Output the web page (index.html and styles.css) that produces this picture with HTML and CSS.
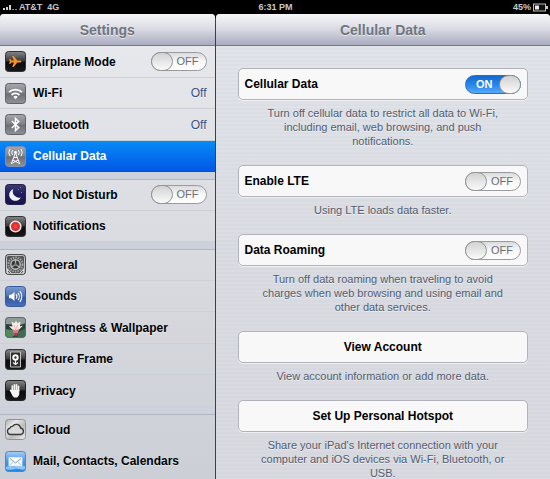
FILE: index.html
```html
<!DOCTYPE html>
<html lang="en">
<head>
<meta charset="utf-8">
<meta name="viewport" content="width=device-width, initial-scale=1">
<title>Settings</title>
<link rel="stylesheet" href="styles.css">
</head>
<body>
<svg class="defs" width="0" height="0" aria-hidden="true">
  <defs>
    <linearGradient id="black" x1="0" y1="0" x2="0" y2="1"><stop offset="0" stop-color="#85868a"/><stop offset=".48" stop-color="#37383b"/><stop offset=".52" stop-color="#0b0b0d"/><stop offset="1" stop-color="#17181a"/></linearGradient>
    <linearGradient id="grey" x1="0" y1="0" x2="0" y2="1"><stop offset="0" stop-color="#a5a7ac"/><stop offset=".48" stop-color="#7f8287"/><stop offset=".52" stop-color="#6b6e74"/><stop offset="1" stop-color="#8f9297"/></linearGradient>
    <linearGradient id="night" x1="0" y1="0" x2="0" y2="1"><stop offset="0" stop-color="#3d3a72"/><stop offset=".5" stop-color="#211d5c"/><stop offset="1" stop-color="#17144a"/></linearGradient>
    <linearGradient id="blue" x1="0" y1="0" x2="0" y2="1"><stop offset="0" stop-color="#7f9bd0"/><stop offset=".48" stop-color="#4c70b5"/><stop offset=".52" stop-color="#3259a5"/><stop offset="1" stop-color="#4770b8"/></linearGradient>
    <linearGradient id="sky" x1="0" y1="0" x2="0" y2="1"><stop offset="0" stop-color="#a8cdf5"/><stop offset=".5" stop-color="#4796ea"/><stop offset="1" stop-color="#2284e6"/></linearGradient>
    <linearGradient id="silver" x1="0" y1="0" x2="1" y2="1"><stop offset="0" stop-color="#aaa"/><stop offset=".3" stop-color="#e6e6e6"/><stop offset=".6" stop-color="#bcbcbc"/><stop offset="1" stop-color="#efefef"/></linearGradient>
    <radialGradient id="red"><stop offset="0" stop-color="#ef4a48"/><stop offset="1" stop-color="#d81c20"/></radialGradient>
    <clipPath id="tile"><rect x=".5" y=".5" width="20" height="20" rx="3"/></clipPath>
  </defs>
</svg>

<header class="status">
  <div class="carrier">
    <svg width="14" height="8" viewBox="0 0 14 8" aria-hidden="true"><path d="M0 5h2v2H0zM3 4h2v3H3zM6 2h2v5H6z" fill="#d5d5d5"/><path d="M9 6h2v1H9zM12 6h2v1h-2z" fill="#888"/></svg>
    <span>AT&amp;T</span><span class="network">4G</span>
  </div>
  <time>6:31 PM</time>
  <div class="battery">
    <span>45%</span>
    <svg width="15" height="9" viewBox="0 0 15 9" aria-hidden="true"><rect x=".5" y="1" width="12" height="7" fill="#111" stroke="#bbb"/><path d="M2 2.5h4v4H2z" fill="#e8e8e8"/><path d="M13 3h2v3h-2z" fill="#ccc"/></svg>
  </div>
</header>

<div class="split">
  <nav class="sidebar" aria-label="Settings">
    <h1 class="bar">Settings</h1>
    <ul class="group">
      <li><label class="item">
        <svg class="icon" viewBox="0 0 21 21" aria-hidden="true"><rect x=".5" y=".5" width="20" height="20" rx="3" fill="url(#black)" stroke="#333"/><path d="M16.5 10.5c0-.7-.9-1.1-2-1.1h-2.2L8.7 5H7.2l1.7 4.400H6.400L5.200 7.900H4.100l.7 2.600-.7 2.600h1.100l1.200-1.500h2.500L7.200 16h1.500l3.600-4.400h2.200c1.100 0 2-.4 2-1.100z" fill="#f7941f"/></svg>
        <span class="name">Airplane Mode</span>
        <span class="switch"><input type="checkbox" role="switch"><span class="state off">OFF</span><span class="state on">ON</span></span>
      </label></li>
      <li><a class="item" href="#wifi">
        <svg class="icon" viewBox="0 0 21 21" aria-hidden="true"><rect x=".5" y=".5" width="20" height="20" rx="3" fill="url(#grey)" stroke="#606267"/><g fill="none" stroke="#fff" stroke-width="1.8"><path d="M4 9.2a9.4 9.4 0 0 1 13 0"/><path d="M6.5 12a5.8 5.8 0 0 1 8 0"/></g><path d="M8.3 13.8a3.2 3.2 0 0 1 4.4 0l-2.2 2.4z" fill="#fff"/></svg>
        <span class="name">Wi-Fi</span><span class="value">Off</span>
      </a></li>
      <li><a class="item" href="#bluetooth">
        <svg class="icon" viewBox="0 0 21 21" aria-hidden="true"><rect x=".5" y=".5" width="20" height="20" rx="3" fill="url(#grey)" stroke="#606267"/><path d="M6.8 7l7 6.6-3.3 3V4.4l3.3 3-7 6.6" fill="none" stroke="#fff" stroke-width="1.5"/></svg>
        <span class="name">Bluetooth</span><span class="value">Off</span>
      </a></li>
      <li><a class="item current" href="#cellular" aria-current="page">
        <svg class="icon" viewBox="0 0 21 21" aria-hidden="true"><rect x=".5" y=".5" width="20" height="20" rx="3" fill="url(#grey)" stroke="#7c90b0"/><g fill="none" stroke="#fff"><path d="M10.5 7L6.2 18M10.5 7l4.3 11M8.8 11.5h3.4M8 14l5.8 3.2M13 14l-5.8 3.2"/><path d="M7.6 4.2a4 4 0 0 0 0 4.8M13.4 4.2a4 4 0 0 1 0 4.8M5 3a6.4 6.4 0 0 0 0 7.2M16 3a6.4 6.4 0 0 1 0 7.2"/></g><circle cx="10.5" cy="6.5" r="1.4" fill="#fff"/></svg>
        <span class="name">Cellular Data</span>
      </a></li>
    </ul>
    <ul class="group">
      <li><label class="item">
        <svg class="icon" viewBox="0 0 21 21" aria-hidden="true"><rect x=".5" y=".5" width="20" height="20" rx="3" fill="url(#night)" stroke="#25234e"/><path d="M8.3 5a6.1 6.1 0 1 0 7.5 8.4A6.2 6.2 0 0 1 8.3 5z" fill="#f2f3fa"/><path d="M13 5h1v1h-1zM16 8h1v1h-1zM15 3h1v1h-1z" fill="#7b78ac"/></svg>
        <span class="name">Do Not Disturb</span>
        <span class="switch"><input type="checkbox" role="switch"><span class="state off">OFF</span><span class="state on">ON</span></span>
      </label></li>
      <li><a class="item" href="#notifications">
        <svg class="icon" viewBox="0 0 21 21" aria-hidden="true"><rect x=".5" y=".5" width="20" height="20" rx="3" fill="url(#black)" stroke="#333"/><circle cx="10.5" cy="10.5" r="5.3" fill="url(#red)" stroke="#f4e8e8" stroke-width="1.6"/></svg>
        <span class="name">Notifications</span>
      </a></li>
    </ul>
    <ul class="group">
      <li><a class="item" href="#general">
        <svg class="icon" viewBox="0 0 21 21" aria-hidden="true"><rect x=".5" y=".5" width="20" height="20" rx="3" fill="#58595b" stroke="#4a4b4d"/><g clip-path="url(#tile)"><rect x="1.5" y="1.5" width="18" height="18" rx="2" fill="none" stroke="#bfc0c2"/><circle cx="10.5" cy="10.5" r="7" fill="#464749" stroke="#a9aaac" stroke-width="2" stroke-dasharray="1.5 1"/><circle cx="10.5" cy="10.5" r="4.7" fill="#353638" stroke="#c5c6c8" stroke-width="1.4"/><path d="M10.5 10.5V6M10.5 10.5l4 2.6M10.5 10.5l-4 2.6" stroke="#b2b3b5" stroke-width="1.2"/><circle cx="10.5" cy="10.5" r="1.5" fill="#77787a"/><path d="M2 14l5 5.5H2zM19 14l-5 5.5h5z" fill="#dadbdd"/><path d="M3 17l2 2.4M18 17l-2 2.4" stroke="#444"/></g></svg>
        <span class="name">General</span>
      </a></li>
      <li><a class="item" href="#sounds">
        <svg class="icon" viewBox="0 0 21 21" aria-hidden="true"><rect x=".5" y=".5" width="20" height="20" rx="3" fill="url(#blue)" stroke="#3b5c9c"/><path d="M4 8.8h2.2L9.5 6v9l-3.3-2.8H4z" fill="#fff"/><path d="M11 8.3a3.4 3.4 0 0 1 0 4.4M12.9 6.8a5.6 5.6 0 0 1 0 7.4M14.8 5.2a8 8 0 0 1 0 10.6" fill="none" stroke="#fff" stroke-width="1.1"/></svg>
        <span class="name">Sounds</span>
      </a></li>
      <li><a class="item" href="#brightness">
        <svg class="icon" viewBox="0 0 21 21" aria-hidden="true"><g clip-path="url(#tile)"><path d="M0 0h21v21H0z" fill="#28403b"/><path d="M0 0h21v6l-6 2L0 7z" fill="#8d9a96"/><path d="M0 12l7 1 3 5-4 3H0z" fill="#4f8a5b"/><path d="M13 15l8-4v10h-9z" fill="#3d6b54"/><path d="M10.5 16L4 9l3.500.5L6.500 4.500l3 1.700L11 3.500l1.500 2.800 3-1.800-.6 4.700 3-.5z" fill="#f6ebe6"/><path d="M7 12l3.500 1.200L14.500 12l-2 4.500-1.500 2.500-2.500-2.500z" fill="#e0768c"/><path d="M9 8l1.700 5L12.600 8" fill="none" stroke="#e9b9ba"/><path d="M9 16h3.500l-1.700 4z" fill="#b9304f"/></g><rect x=".5" y=".5" width="20" height="20" rx="3" fill="none" stroke="#596b69"/></svg>
        <span class="name">Brightness &amp; Wallpaper</span>
      </a></li>
      <li><a class="item" href="#frame">
        <svg class="icon" viewBox="0 0 21 21" aria-hidden="true"><rect x=".5" y=".5" width="20" height="20" rx="3" fill="url(#black)" stroke="#333"/><path d="M5.500 3h10v15h-10z" fill="#2c2d2f" stroke="#c4c4c6"/><circle cx="10.500" cy="8.500" r="2.200" fill="none" stroke="#fff" stroke-width="2"/><path d="M10.500 11v5M10.500 15.500l-2.500-2M10.500 15.500l2.500-2" fill="none" stroke="#f0f0f0" stroke-width="1.200"/></svg>
        <span class="name">Picture Frame</span>
      </a></li>
      <li><a class="item" href="#privacy">
        <svg class="icon" viewBox="0 0 21 21" aria-hidden="true"><rect x=".5" y=".5" width="20" height="20" rx="3" fill="url(#black)" stroke="#222"/><g stroke="#f4f4f4" stroke-width="1.700" stroke-linecap="round"><path d="M7.300 11V6.200M9.400 11V4.800M11.500 11V4.800M13.500 11V6.300M5.600 10.500l2 3"/></g><path d="M6.500 10h7.800v3.200c0 2-1 3.500-2.300 4.300H9c-1.200-1-2.500-3-2.500-4.500z" fill="#f4f4f4"/></svg>
        <span class="name">Privacy</span>
      </a></li>
    </ul>
    <ul class="group">
      <li><a class="item" href="#icloud">
        <svg class="icon" viewBox="0 0 21 21" aria-hidden="true"><rect x=".5" y=".5" width="20" height="20" rx="3" fill="url(#silver)" stroke="#929294"/><path d="M5.500 15.500a3.200 3.200 0 0 1-.6-6.300 2.500 2.500 0 0 1 2.700-1.800 4.300 4.300 0 0 1 7.900 1.600 3.300 3.300 0 0 1 .3 6.500z" fill="#d9d9da" stroke="#38393b" stroke-width="1.300"/></svg>
        <span class="name">iCloud</span>
      </a></li>
      <li><a class="item" href="#mail">
        <svg class="icon" viewBox="0 0 21 21" aria-hidden="true"><rect x=".5" y=".5" width="20" height="20" rx="3" fill="url(#sky)" stroke="#4b86c9"/><path d="M1 16c3-2 5 1 9 0s6-1 10-1v3c-3 2-6-1-10 0s-6 1-9 0z" fill="#8cc5fa"/><path d="M4 6.500h13v8.500H4z" fill="#f8fafd" stroke="#dce7f3"/><path d="M5 7.500l5.500 4.500L16 7.500" fill="none" stroke="#7d9cbf"/><path d="M5 14l3.500-3M16 14l-3.500-3" fill="none" stroke="#bccbdd"/></svg>
        <span class="name">Mail, Contacts, Calendars</span>
      </a></li>
    </ul>
  </nav>

  <main class="detail">
    <h2 class="bar">Cellular Data</h2>
    <div class="sections">
      <section>
        <label class="card">
          <span class="name">Cellular Data</span>
          <span class="switch"><input type="checkbox" role="switch" checked><span class="state off">OFF</span><span class="state on">ON</span></span>
        </label>
        <p class="note">Turn off cellular data to restrict all data to Wi-Fi, including email, web browsing, and push notifications.</p>
      </section>
      <section>
        <label class="card">
          <span class="name">Enable LTE</span>
          <span class="switch"><input type="checkbox" role="switch"><span class="state off">OFF</span><span class="state on">ON</span></span>
        </label>
        <p class="note">Using LTE loads data faster.</p>
      </section>
      <section>
        <label class="card">
          <span class="name">Data Roaming</span>
          <span class="switch"><input type="checkbox" role="switch"><span class="state off">OFF</span><span class="state on">ON</span></span>
        </label>
        <p class="note">Turn off data roaming when traveling to avoid charges when web browsing and using email and other data services.</p>
      </section>
      <section>
        <button class="card action" type="button">View Account</button>
        <p class="note">View account information or add more data.</p>
      </section>
      <section>
        <button class="card action" type="button">Set Up Personal Hotspot</button>
        <p class="note">Share your iPad's Internet connection with your computer and iOS devices via Wi-Fi, Bluetooth, or USB.</p>
      </section>
    </div>
  </main>
</div>
</body>
</html>
```
FILE: styles.css
```css
* { box-sizing: border-box; }

body {
  margin: 0;
  height: 100vh;
  overflow: hidden;
  display: flex;
  flex-direction: column;
  background: #000;
  color: #000;
  font-family: "Liberation Sans", Arial, sans-serif;
  font-size: 12px;
}

.defs { position: absolute; }

/* Status bar */
.status {
  display: grid;
  grid-template-columns: 1fr auto 1fr;
  align-items: center;
  height: 14px;
  padding: 0 2px 0 3px;
  color: #c8c8c8;
  font-size: 9px;
  font-weight: bold;
}
.carrier, .battery { display: flex; align-items: center; gap: 2px; }
.network { margin-left: 3px; }
.battery { justify-content: flex-end; }

/* Two panes */
.split {
  flex: 1;
  min-height: 0;
  display: grid;
  grid-template-columns: 39% 1fr;
  gap: 1px;
  background: linear-gradient(#000 4px, #3d3f48 4px);
}
.sidebar, .detail {
  overflow: hidden;
  border-radius: 4px 4px 0 0;
}
.sidebar {
  background: linear-gradient(#e8eaee, #d9dbe0 50%, #cdcfd7);
}
.detail {
  background:
    repeating-linear-gradient(transparent 0 2px, rgba(120, 140, 170, .03) 2px 4px),
    linear-gradient(#e2e5ea, #dadce2 50%, #d9dae0);
}
.bar {
  display: flex;
  align-items: center;
  justify-content: center;
  height: 32px;
  margin: 0;
  border-bottom: 1px solid #747a92;
  background: linear-gradient(#f6f6f9, #dcdde5 45%, #a9acbf);
  color: #70757f;
  font-size: 14px;
  font-weight: bold;
  text-shadow: 0 1px rgba(255, 255, 255, .6);
}

/* Sidebar list */
.group { margin: 0; padding: 0; list-style: none; }
.group + .group {
  border-top: 7px solid #cdd1db;
  box-shadow: inset 0 1px #b2b6c2;
}
.group li { height: 31px; }
.group li:nth-child(odd) { height: 32px; }
.item {
  display: flex;
  align-items: center;
  height: 100%;
  padding: 0 8px 0 5px;
  border-bottom: 1px solid #ccd0d7;
  color: #000;
  text-decoration: none;
  text-shadow: 0 1px rgba(255, 255, 255, .5);
}
.icon { width: 21px; height: 21px; margin-right: 7px; }
.name { flex: 1; font-weight: bold; white-space: nowrap; }
.value { color: #385487; }
.current {
  background: linear-gradient(#078bf6, #0257e5);
  border-color: #0453cd;
  color: #fff;
  text-shadow: none;
}

/* Switch */
.switch {
  display: grid;
  align-items: center;
  width: 56px;
  height: 19px;
  text-shadow: none;
}
.switch > * { grid-area: 1 / 1; }
.switch input {
  appearance: none;
  display: flex;
  width: 100%;
  height: 100%;
  margin: 0;
  border: 1px solid #9a9ba0;
  border-radius: 10px;
  background: linear-gradient(#dadbdd, #f8f8f8 50%, #fff);
}
.switch input::before {
  content: "";
  width: 20px;
  margin: -1px;
  border: 1px solid #929396;
  border-radius: 10px;
  background: linear-gradient(#d2d2d3, #fafafa);
}
.switch input:checked {
  justify-content: flex-end;
  border-color: #2c6cb8;
  background: linear-gradient(#1468cf, #2b8cf0 60%, #5aabf7);
}
.state {
  color: #6c6d72;
  font-size: 11px;
  line-height: 19px;
  pointer-events: none;
}
.off { padding-left: 26px; }
.on { display: none; padding-left: 11px; color: #fff; font-weight: bold; }
input:checked ~ .off { display: none; }
input:checked ~ .on { display: block; }

/* Detail pane */
.sections {
  display: flex;
  flex-direction: column;
  gap: 17px;
  padding: 22px 22px 0;
}
.card {
  display: flex;
  align-items: center;
  width: 100%;
  height: 32px;
  padding: 0 6px;
  border: 1px solid #b0b3bb;
  border-radius: 5px;
  background: #f8f8f8;
  box-shadow: 0 1px rgba(255, 255, 255, .6);
}
.action {
  justify-content: center;
  color: #000;
  font: bold 12px "Liberation Sans", Arial, sans-serif;
}
.note {
  margin: 6px 0 0;
  padding: 0 20px;
  color: #515b6e;
  font-size: 11px;
  line-height: 14px;
  text-align: center;
  text-shadow: 0 1px rgba(255, 255, 255, .6);
}
```
